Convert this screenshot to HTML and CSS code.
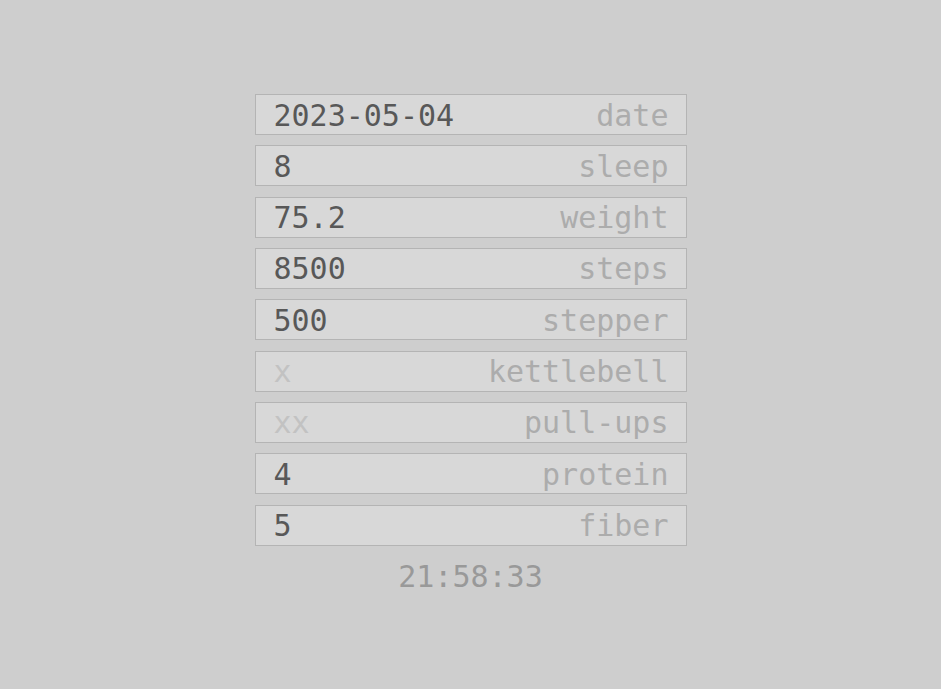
FILE: index.html
```html
<!DOCTYPE html>
<html>
<head>
<meta charset="utf-8">
<link rel="stylesheet" href="styles.css">
</head>
<body>
<main class="form">
  <div class="row"><span class="value">2023-05-04</span><span class="label">date</span></div>
  <div class="row"><span class="value">8</span><span class="label">sleep</span></div>
  <div class="row"><span class="value">75.2</span><span class="label">weight</span></div>
  <div class="row"><span class="value">8500</span><span class="label">steps</span></div>
  <div class="row"><span class="value">500</span><span class="label">stepper</span></div>
  <div class="row"><span class="value placeholder">x</span><span class="label">kettlebell</span></div>
  <div class="row"><span class="value placeholder">xx</span><span class="label">pull-ups</span></div>
  <div class="row"><span class="value">4</span><span class="label">protein</span></div>
  <div class="row"><span class="value">5</span><span class="label">fiber</span></div>
  <div class="time">21:58:33</div>
</main>
</body>
</html>
```
FILE: styles.css
```css
html, body {
  margin: 0;
  padding: 0;
  background: #cecece;
}
body {
  font-family: "DejaVu Sans Mono", "Liberation Mono", monospace;
  font-size: 30px;
}
.form {
  width: 432px;
  margin: 94px auto 0;
  display: flex;
  flex-direction: column;
  gap: 10.33px;
}
.row {
  box-sizing: border-box;
  height: 41px;
  border: 1px solid #b4b4b4;
  background: #d8d8d8;
  display: flex;
  align-items: center;
  justify-content: space-between;
  padding: 2px 17px 0 18px;
  line-height: 1;
}
.value { color: #585858; }
.value.placeholder { color: #c2c2c2; }
.label { color: #acacac; }
.time {
  margin-top: 3px;
  text-align: center;
  color: #999999;
  line-height: 36px;
}
```
